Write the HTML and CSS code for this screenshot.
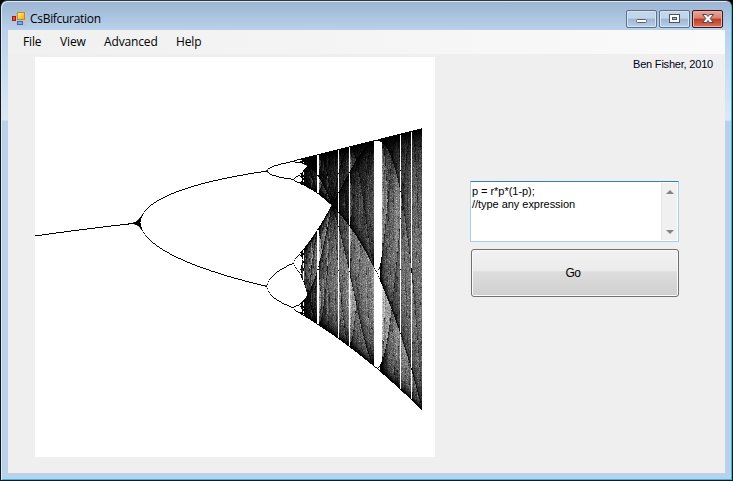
FILE: index.html
```
<!DOCTYPE html>
<html lang="en">
<head>
<meta charset="utf-8">
<title>CsBifcuration</title>
<link rel="stylesheet" href="styles.css">
</head>
<body>
<div class="window">
  <header class="titlebar">
    <svg class="app-icon" width="14" height="14" viewBox="0 0 14 14">
      <defs>
        <linearGradient id="gold" x2="1" y2="1"><stop stop-color="#fff0a0"/><stop offset="1" stop-color="#f0a500"/></linearGradient>
      </defs>
      <path d="M5 0h9v14H4V10H0V4h5z" fill="#bfc4c8"/>
      <rect x="5.5" y=".5" width="7" height="7" fill="url(#gold)" stroke="#c58a10"/>
      <rect x=".5" y="4.500" width="3" height="4" fill="#e2543c" stroke="#a51b10"/>
      <rect x="5.500" y="9.500" width="5" height="3" fill="#7fa9f0" stroke="#3b69c4"/>
    </svg>
    <h1 class="title">CsBifcuration</h1>
    <div class="controls">
      <button class="control" aria-label="Minimize"><svg width="30" height="17"><rect x="9.500" y="8.500" width="10" height="3" rx="1" fill="#fff" stroke="#56606f"/></svg></button>
      <button class="control" aria-label="Maximize"><svg width="30" height="17"><rect x="9.500" y="3.500" width="10" height="8" fill="#fff" stroke="#4a5266"/><rect x="12.500" y="6.500" width="4" height="2" fill="#a5bed8" stroke="#4a5266"/></svg></button>
      <button class="control control-close" aria-label="Close"><svg width="30" height="17"><path d="M9.500 3.500h4l1.500 2 1.500-2h4l-3.300 4 3.300 4h-4l-1.500-2-1.500 2h-4l3.300-4z" fill="#fff" stroke="#59404a"/></svg></button>
    </div>
  </header>
  <main class="client">
    <nav class="menu"><span class="file">File</span><span class="view">View</span><span class="advanced">Advanced</span><span class="help">Help</span></nav>
    <div class="content">
      <canvas id="plot" class="plot" width="400" height="400"></canvas>
      <aside class="side">
        <p class="credit">Ben Fisher, 2010</p>
        <div class="editor">
          <div class="code"><div class="line1">p = r*p*(1-p);</div><div class="line2">//type any expression</div></div>
          <div class="scroll"><svg width="15" height="57" viewBox="0 0 15 57"><path d="M4 11l4-4 4 4z" fill="#858585"/><path d="M4 47h8l-4 4z" fill="#858585"/></svg></div>
        </div>
        <button class="go">Go</button>
      </aside>
    </div>
  </main>
</div>
<script src="plot.js"></script>
</body>
</html>
```
FILE: styles.css
```
* { box-sizing: border-box; }
body { margin: 0; background: #000; overflow: hidden; }
.window {
  width: 733px; height: 481px;
  display: flex; flex-direction: column;
  padding: 0 7px 7px 7px;
  border: 1px solid #15181c;
  border-top-color: #30343b;
  border-radius: 7px 7px 0 0;
  background: linear-gradient(#9ab4d2 0, #b9d1ea 29px, #c5daef 60px, #dce8f5 119px, #b9d1ea 120px);
  box-shadow: inset 1px 1px #dceaf7, inset -1px -1px #32b9dc;
}
.titlebar { height: 29px; display: flex; align-items: flex-start; flex: none; padding-right: 2px; }
.app-icon { margin: 11px 0 0 4px; }
.title { margin: 9px 0 0 4px; font: 12px/18px "Open Sans", sans-serif; color: #000; letter-spacing: -.3px; }
.controls { display: flex; gap: 2px; margin: 9px 0 0 auto; }
.control {
  display: block; width: 31px; height: 18px; padding: 0; overflow: hidden;
  border: 1px solid #5e708a; border-radius: 2px;
  background: linear-gradient(#c3d5e9 0 45%, #9db6d2 50%, #b8cfe7);
  box-shadow: inset 0 0 0 1px #d5e3f2;
}
.control svg { display: block; }
.control-close { border-color: #42131c; background: linear-gradient(#e5a89b 0, #d98172 45%, #bd3a24 50%, #d4735a); box-shadow: inset 0 0 0 1px #e8b1a6; }
.client { flex: 1; background: #efefef; display: flex; flex-direction: column; }
.menu {
  height: 24px; flex: none; display: grid; grid-template-columns: 37px 44px 72px auto;
  padding-left: 15px; font: 12px/24px "Open Sans", sans-serif; color: #000; letter-spacing: -.15px;
  background: linear-gradient(90deg, #f0f0f0, #fafafa);
}
.content { display: flex; padding: 3px 12px 0 27px; }
.plot { display: block; background: #fff; }
.side { flex: 1; padding-left: 35px; font: 11px/13px "Liberation Sans", sans-serif; color: #000; letter-spacing: -.04px; }
.credit { margin: 1px 0 0; text-align: right; letter-spacing: -.2px; color: #000020; }
.editor {
  width: 209px; height: 61px; margin-top: 110px; display: flex; justify-content: space-between;
  background: #fff; border: 1px solid #a9cfe4; border-top-color: #3d7bad; padding: 1px;
}
.code { padding: 2px 0 0; white-space: pre; }
.scroll { width: 16px; background: #f0f0f0; border-left: 1px solid #e3e3e3; }
.scroll svg { display: block; }
.go {
  display: block; width: 208px; height: 48px; margin: 7px 0 0 1px; padding: 0 4px 0 0;
  border: 1px solid #707070; border-radius: 3px;
  background: linear-gradient(#f2f2f2 0, #ebebeb 46%, #dddddd 47%, #cfcfcf);
  box-shadow: inset 0 0 0 1px #fafafa; font: 12px "Liberation Sans", sans-serif; color: #000; letter-spacing: -.6px;
}
```
FILE: plot.js
```
// Bifurcation diagram of p = r*p*(1-p), one column per value of r.
const canvas = document.getElementById("plot");
const ctx = canvas.getContext("2d");
const size = 400, step = 0.00355, start = 3.92219 - 365 * step;

// Columns that fall inside a wide periodic window.
const windows = new Set([282, 283, 303, 314, 339, 340, 341, 342, 343, 344, 345, 346, 365, 376]);

function orbit(r, seeds, settle, samples) {
  const hits = new Float64Array(size);
  for (let s = 0; s < seeds; s++) {
    let p = 0.4 + s * 0.008;
    for (let i = 0; i < settle; i++) p = r * p * (1 - p);
    for (let i = 0; i < samples; i++) {
      p = r * p * (1 - p);
      hits[Math.floor(353.4 - p * 281.7)]++;
    }
  }
  return hits;
}

const image = ctx.createImageData(size, size);
image.data.fill(255);
for (let x = 0; x < size; x++) {
  let r = start + x * step;
  if (r > 4) break;
  let hits = x < 200 ? orbit(r, 8, 120, 1250) : orbit(r, 1, 200, 10000);
  // Step off the narrow periodic windows so the chaotic bands stay continuous.
  if (x >= 273 && !windows.has(x)) {
    const wanted = x < 296 ? 75 : 150;
    for (let n = 0; n < 6 && hits.filter(h => h > 3).length < wanted; n++) {
      r += (n % 2 ? -1 : 1) * (n + 1) * 0.0008;
      hits = orbit(r, 1, 200, 10000);
    }
  }
  for (let y = 0; y < size; y++) {
    const shade = 255 * Math.exp(-0.036 * hits[y]);
    const at = (y * size + x) * 4;
    image.data[at] = image.data[at + 1] = image.data[at + 2] = shade;
  }
}
ctx.putImageData(image, 0, 0);
```
